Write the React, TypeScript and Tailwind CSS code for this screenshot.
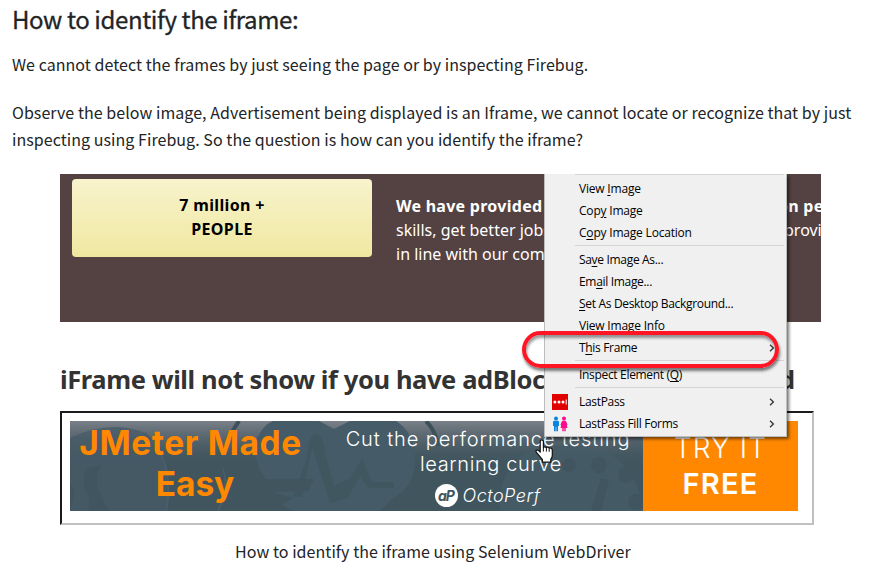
import type { ReactNode } from "react";

const ui = "font-['Open_Sans','Noto_Sans',sans-serif]";

function Item({ children, icon, arrow, tight }: { children: ReactNode; icon?: ReactNode; arrow?: boolean; tight?: boolean }) {
  return (
    <div className="flex h-[22px] items-center">
      <span className="flex w-[34px] shrink-0 items-center pl-[7px]">{icon}</span>
      <span className={`flex-1 whitespace-nowrap text-[12px] ${tight ? "tracking-[-0.32px]" : "tracking-[-0.2px]"}`}>{children}</span>
      {arrow && (
        <svg className="mr-[11px]" width="6" height="8" viewBox="0 0 6 8" fill="none" stroke="#333" strokeWidth="1.3">
          <path d="M1 .7 4.4 4 1 7.3" />
        </svg>
      )}
    </div>
  );
}

function Line() {
  return <div className="mb-[3px] mt-px ml-[30px] mr-[2px] h-px bg-[#d4d4d4]" />;
}

function U({ children }: { children: ReactNode }) {
  return <span className="underline decoration-1 underline-offset-2">{children}</span>;
}

function LastPassIcon() {
  return (
    <svg width="16" height="16" viewBox="0 0 16 16">
      <rect width="16" height="16" fill="#e00000" />
      <circle cx="2.9" cy="8" r="1.5" fill="#fff" />
      <circle cx="7" cy="8" r="1.5" fill="#fff" />
      <circle cx="11" cy="8" r="1.5" fill="#fff" />
      <rect x="13.7" y="5.5" width="1" height="5" fill="#fff" />
    </svg>
  );
}

function PeopleIcon() {
  return (
    <svg width="16" height="16" viewBox="0 0 16 16">
      <g fill="#0a84dc">
        <circle cx="4" cy="2.5" r="2" />
        <path d="M2.4 4.8h3.2Q7 4.8 7 6.2V10H6v5.2H4.3V11h-.6v4.2H2V10H1V6.2q0-1.4 1.4-1.4Z" />
      </g>
      <g fill="#fb0a8c">
        <circle cx="12" cy="2.5" r="2" />
        <path d="M10.8 4.8h2.4l1 .8L15.6 9l-.9.5L15.5 12h-1.8v3.2h-1.4V12h-.6v3.2h-1.4V12H8.5l.8-2.5L8.4 9l1.4-3.4Z" />
      </g>
    </svg>
  );
}

function BannerArt() {
  return (
    <svg className="absolute inset-0" width="573" height="90" viewBox="0 0 573 90">
      <defs>
        <linearGradient id="sheen" x1="0" y1="0" x2="0" y2="1">
          <stop offset="0" stopColor="#92929a" stopOpacity=".7" />
          <stop offset=".38" stopColor="#5c6670" stopOpacity=".15" />
          <stop offset=".5" stopColor="#41565f" stopOpacity="0" />
        </linearGradient>
      </defs>
      <rect width="573" height="90" fill="#40555e" />
      <rect width="573" height="90" fill="url(#sheen)" />
      <g fill="#455b67">
        <path d="M0 17Q40-2 75 12L92 32Q105 60 96 90H0Z" opacity=".75" />
        <path d="M187 18Q193 4 203 0h46l15 8 16-8h46q16 10 19 32 3 32-22 45l-13 13H224l-13-6 12-7-20-6 35-1 6-12h-48Q181 40 187 18Z" />
        <path d="M430 90q-2-57 45-63 52-10 78 16 17 17 20 47Z" opacity=".8" />
      </g>
      <path d="M237 36q2-23 9-23t9 19l9 33 16-8 12-20 10 24h22v6h-26l-8-12-12 22-18 5-18-56-10 50h-9Z" fill="#40555e" opacity=".7" />
      <g fill="#40555f">
        <path d="M31 44q-8 15-1 28l9 18H18q4-12-3-22-4-12 3-21ZM0 63q7 5 2 20l-2 7Z" />
        <circle cx="529" cy="44" r="8" />
        <circle cx="556" cy="54" r="8" />
        <circle cx="566" cy="81" r="8" />
        <path d="m531 57 8 2-8 31h-10Z" />
        <circle cx="499" cy="44" r="7" />
      </g>
      <g fill="none" stroke="#485f6b" strokeWidth="2">
        <path d="M75 12Q106 42 96 90M153 48q7 18-5 42" />
        <path d="m169 0-11 17M356 0q10 10 12 25" stroke="#3d515c" strokeWidth="4" />
      </g>
    </svg>
  );
}

function Hand() {
  return (
    <svg className="absolute left-[535px] top-[439px]" width="19" height="25" viewBox="0 0 19 25">
      <path
        d="M5.2 2.6a1.6 1.6 0 0 1 3.2 0V8.2q1.6-1 3 .3 1.600-.7 2.800.6 2.600-.6 3.100 1.900v5.200q0 2.200-1.500 4v3H7.400v-2.600L4.600 17.200 1.200 13.200q-.9-2 1.100-2.200 1 0 2.900 2.200Z"
        fill="#fff"
        stroke="#111"
        strokeWidth="1.2"
        strokeLinejoin="round"
      />
      <path d="M8.400 8v4.500M11.400 8.600v4M14.200 9.200v3.600" stroke="#111" strokeWidth="1" fill="none" />
    </svg>
  );
}

export default function App() {
  return (
    <main className="relative h-[582px] w-[869px] overflow-hidden bg-white font-['Noto_Sans_CJK_SC',sans-serif] text-[#222426]">
      <h1 className="h-[40px] whitespace-nowrap pl-3 text-[24px] leading-[38px] tracking-[-0.4px] [-webkit-text-stroke:0.3px_#222426]">
        <span>How to identify the iframe:</span>
      </h1>
      <p className="mt-[11px] h-[27px] whitespace-nowrap pl-3 text-[16px] leading-[27px] tracking-[0.052px]">
        <span>We cannot detect the frames by just seeing the page or by inspecting Firebug.</span>
      </p>
      <p className="mt-[21px] h-[54px] whitespace-nowrap pl-3 text-[16px] leading-[27px] tracking-[0.052px]">
        <span>Observe the below image, Advertisement being displayed is an Iframe, we cannot locate or recognize that by just</span>
        <br />
        <span>inspecting using Firebug. So the question is how can you identify the iframe?</span>
      </p>

      <section className={`ml-[60px] mt-[21px] flex h-[148px] w-[761px] overflow-hidden bg-[#544141] pl-3 pt-[5px] ${ui}`}>
        <div className="flex h-[78px] w-[300px] shrink-0 flex-col items-center rounded-[4px] bg-linear-to-b from-[#f8f3cc] to-[#efe8a0] pt-[14px] font-['Noto_Sans',sans-serif] text-[16px] font-bold leading-6 tracking-[0.35px] text-black">
          <span>7 million +</span>
          <span>PEOPLE</span>
        </div>
        <div className="ml-6 mt-[15px] whitespace-nowrap font-['Noto_Sans',sans-serif] text-[16px] leading-6 text-white">
          <p className="flex font-bold tracking-[0.27px]">
            <span className="w-[382px]">We have provided</span>
            <span>on pe</span>
          </p>
          <p className="flex">
            <span className="w-[388px]">skills, get better jobs</span>
            <span>provi</span>
          </p>
          <p>in line with our commit</p>
        </div>
      </section>

      <h2 className="ml-[60px] mt-[38px] flex h-[39px] whitespace-nowrap font-['Noto_Sans',sans-serif] text-[25.5px] font-bold leading-[39px] tracking-[-0.4px] text-[#333]">
        <span className="w-[719px]">iFrame will not show if you have adBlock</span>
        <span>d</span>
      </h2>

      <section className="ml-[60px] mt-[12px] h-[114px] w-[754px] border-2 border-b-[#c0c0c0] border-l-[#1b1b1b] border-r-[#c0c0c0] border-t-[#1b1b1b] p-2">
        <div className="flex h-[90px] w-[728px] overflow-hidden font-['Inter',sans-serif]">
          <div className="relative flex w-[573px] text-white">
            <BannerArt />
            <div className="relative flex w-[241px] flex-col items-center whitespace-nowrap pt-[2px] text-[33.5px] font-bold leading-[41px] tracking-[0.6px] text-[#ff8800]">
              <span>JMeter Made</span>
              <span className="mr-[-9px] tracking-[-0.1px]">Easy</span>
            </div>
            <div className="relative flex flex-1 flex-col items-center whitespace-nowrap pl-[22px] pt-[6px] text-[20px] font-light leading-[25px] tracking-[0.9px]">
              <span>Cut the performance testing</span>
              <span className="mr-[-6px] tracking-[0.6px]">learning curve</span>
              <div className="mt-[7px] flex h-[23px] items-center gap-1">
                <span className="flex size-[23px] items-center justify-center rounded-full bg-white pr-[2px] text-[14px] font-bold italic tracking-[-1px] text-[#40555f]">aP</span>
                <span className="text-[18px] italic tracking-[0.5px]">OctoPerf</span>
              </div>
            </div>
          </div>
          <div className="flex w-[155px] flex-col items-center bg-[#ff8800] pt-[9px] text-[28px] leading-[36px] text-white">
            <span className="font-light tracking-[1.1px]">TRY IT</span>
            <span className="text-[29px] font-semibold tracking-[1.2px]">FREE</span>
          </div>
        </div>
      </section>

      <p className="mt-[13px] whitespace-nowrap pl-[235px] text-[16px] leading-[27px] tracking-[0.055px]">
        <span>How to identify the iframe using Selenium WebDriver</span>
      </p>

      <nav className={`absolute left-[544px] top-[174px] h-[263px] w-[243px] border-b border-l border-r border-[#bdbdbd] bg-[#f0f0f0] text-black shadow-[2px_2px_3px_rgba(0,0,0,0.55)] [clip-path:inset(0_-8px_-8px_0)] ${ui}`}>
        <div className="mb-[3px] ml-[30px] mr-[2px] h-px bg-[#d4d4d4]" />
        <Item>View <U>I</U>mage</Item>
        <Item>Cop<U>y</U> Image</Item>
        <Item>C<U>o</U>py Image Location</Item>
        <Line />
        <Item tight>Sa<U>v</U>e Image As...</Item>
        <Item tight>Em<U>a</U>il Image...</Item>
        <Item tight><U>S</U>et As Desktop Background...</Item>
        <Item>View Image Info</Item>
        <Item tight arrow>T<U>h</U>is Frame</Item>
        <Line />
        <Item tight>Inspect Element (<U>Q</U>)</Item>
        <Line />
        <Item icon={<LastPassIcon />} tight arrow>LastPass</Item>
        <Item icon={<PeopleIcon />} tight arrow>LastPass Fill Forms</Item>
      </nav>
      <div className="absolute left-[522px] top-[331px] h-[37px] w-[257px] rounded-full border-4 border-[#ff1523] shadow-[1px_3px_3px_rgba(0,0,0,0.5),inset_1px_3px_3px_rgba(0,0,0,0.4)]" />
      <Hand />
    </main>
  );
}
